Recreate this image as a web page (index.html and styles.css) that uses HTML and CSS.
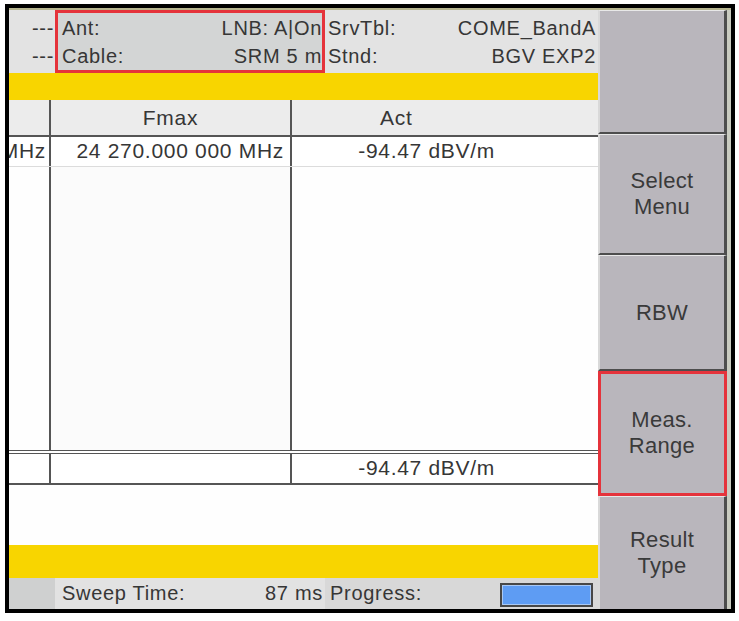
FILE: index.html
```html
<!DOCTYPE html>
<html>
<head>
<meta charset="utf-8">
<link rel="stylesheet" href="styles.css">
</head>
<body>
<div class="screen">
  <div class="main">
    <div class="hdr">
      <div class="hcol ha">
        <div class="kv"><span></span><span>---</span></div>
        <div class="kv"><span></span><span>---</span></div>
      </div>
      <div class="hcol hb">
        <div class="kv"><span>Ant:</span><span>LNB: A|On</span></div>
        <div class="kv"><span>Cable:</span><span>SRM 5 m</span></div>
      </div>
      <div class="hcol hc">
        <div class="kv"><span>SrvTbl:</span><span>COME_BandA</span></div>
        <div class="kv"><span>Stnd:</span><span>BGV EXP2</span></div>
      </div>
    </div>
    <div class="ybar top"></div>
    <div class="row colhdr">
      <div class="c1"></div>
      <div class="c2 center">Fmax</div>
      <div class="c3 act">Act</div>
    </div>
    <div class="row data r1">
      <div class="c1 clip">000 MHz</div>
      <div class="c2 num">24 270.000 000 MHz</div>
      <div class="c3 num">-94.47 dBV/m</div>
    </div>
    <div class="row empty">
      <div class="c1"></div>
      <div class="c2"></div>
      <div class="c3"></div>
    </div>
    <div class="row data r2">
      <div class="c1"></div>
      <div class="c2"></div>
      <div class="c3 num">-94.47 dBV/m</div>
    </div>
    <div class="blank"></div>
    <div class="ybar bottom"></div>
    <div class="status">
      <div class="sa"></div>
      <div class="sb"><span>Sweep Time:</span><span>87 ms</span></div>
      <div class="sc"><span>Progress:</span><span class="prog"></span></div>
    </div>
  </div>
  <div class="softkeys">
    <div class="key k1"></div>
    <div class="key k2"><span>Select<br>Menu</span></div>
    <div class="key k3"><span>RBW</span></div>
    <div class="key k4 marked"><span>Meas.<br>Range</span></div>
    <div class="key k5"><span>Result<br>Type</span></div>
  </div>
</div>
</body>
</html>
```
FILE: styles.css
```css
* { box-sizing: border-box; }
html, body { margin: 0; padding: 0; background: #fff; }
body {
  font-family: "Liberation Sans", Arial, sans-serif;
  color: #363636;
}
.screen {
  margin: 4px 0 0 5px;
  width: 730px;
  height: 609px;
  border: 4px solid #000;
  display: flex;
  background: #fff;
}
.main {
  width: 589px;
  display: flex;
  flex-direction: column;
}
/* header */
.hdr {
  height: 65px;
  border-top: 2px solid #b6b58f;
  display: grid;
  grid-template-columns: 46px 270px 1fr;
  background: #e3e3e3;
  font-size: 20px;
  letter-spacing: 0.7px;
}
.hcol { padding-top: 4px; }
.kv {
  display: flex;
  justify-content: space-between;
  height: 28px;
  line-height: 28px;
  white-space: nowrap;
}
.ha { padding-right: 1px; }
.hb {
  border: 3px solid #e5333b;
  padding: 1px 0 0 4px;
  background: #d3d5d5;
}
.hc { padding-left: 3px; padding-right: 2px; }
.ybar { background: #f8d500; }
.ybar.top { height: 27px; }
.ybar.bottom { height: 33px; }
/* table */
.row {
  display: flex;
  font-size: 21px;
  letter-spacing: 0.7px;
  white-space: nowrap;
}
.c1 { width: 42px; border-right: 2px solid #555; }
.c2 { width: 241px; border-right: 2px solid #555; }
.c3 { flex: 1; }
.colhdr {
  height: 37px;
  background: #ececec;
  border-bottom: 2px solid #555;
  line-height: 35px;
}
.center { text-align: center; }
.act { padding-left: 88px; }
.data { line-height: 28px; }
.r1 {
  height: 30px;
  border-bottom: 1px solid #dcdcdc;
}
.r1 .c3, .r2 .c3 { flex: 0 0 212px; }
.num { text-align: right; padding-right: 6px; }
.r1 .c3.num, .r2 .c3.num { padding-right: 9px; }
.clip {
  overflow: hidden;
  display: flex;
  justify-content: flex-end;
  padding-right: 3px;
}
.empty {
  flex: 1;
  background: #fefefe;
}
.empty .c2 { background: #fbfbfb; }
.r2 {
  height: 35px;
  border-top: 4px double #555;
  border-bottom: 2px solid #555;
}
.blank { height: 60px; background: #fefefe; }
/* status */
.status {
  height: 31px;
  display: grid;
  grid-template-columns: 46px 270px 1fr;
  font-size: 20px;
  letter-spacing: 0.7px;
  line-height: 31px;
  white-space: nowrap;
}
.sa { background: #cfd0d0; }
.sb {
  background: #e2e2e2;
  display: flex;
  justify-content: space-between;
  padding: 0 2px 0 7px;
}
.sc {
  background: #d8d8d8;
  display: flex;
  justify-content: space-between;
  align-items: center;
  padding: 0 5px 0 5px;
}
.prog {
  width: 93px;
  height: 24px;
  margin-top: 3px;
  border: 2px solid #474747;
  background: #5e9cf3;
  box-shadow: inset 0 0 0 1px #a9c8f3;
}
/* softkeys */
.softkeys {
  flex: 1;
  display: flex;
  flex-direction: column;
  border-top: 2px solid #b6b58f;
  background: #c9cbc0;
  padding-right: 4px;
}
.key {
  background: #b9b6bc;
  border-top: 1px solid #e8e8e8;
  border-left: 2px solid #d9d9d9;
  border-right: 3px solid #4d4d4d;
  border-bottom: 2px solid #4d4d4d;
  display: flex;
  align-items: center;
  justify-content: center;
  text-align: center;
  font-size: 22px;
  line-height: 26px;
  letter-spacing: 0.3px;
  color: #3a3a3a;
}
.k1 { height: 124px; }
.k2 { height: 121px; }
.k3 { height: 116px; }
.k4 { height: 125px; }
.k5 { flex: 1; border-bottom: none; }
.marked { outline: 3px solid #e5333b; outline-offset: -3px; }
```
